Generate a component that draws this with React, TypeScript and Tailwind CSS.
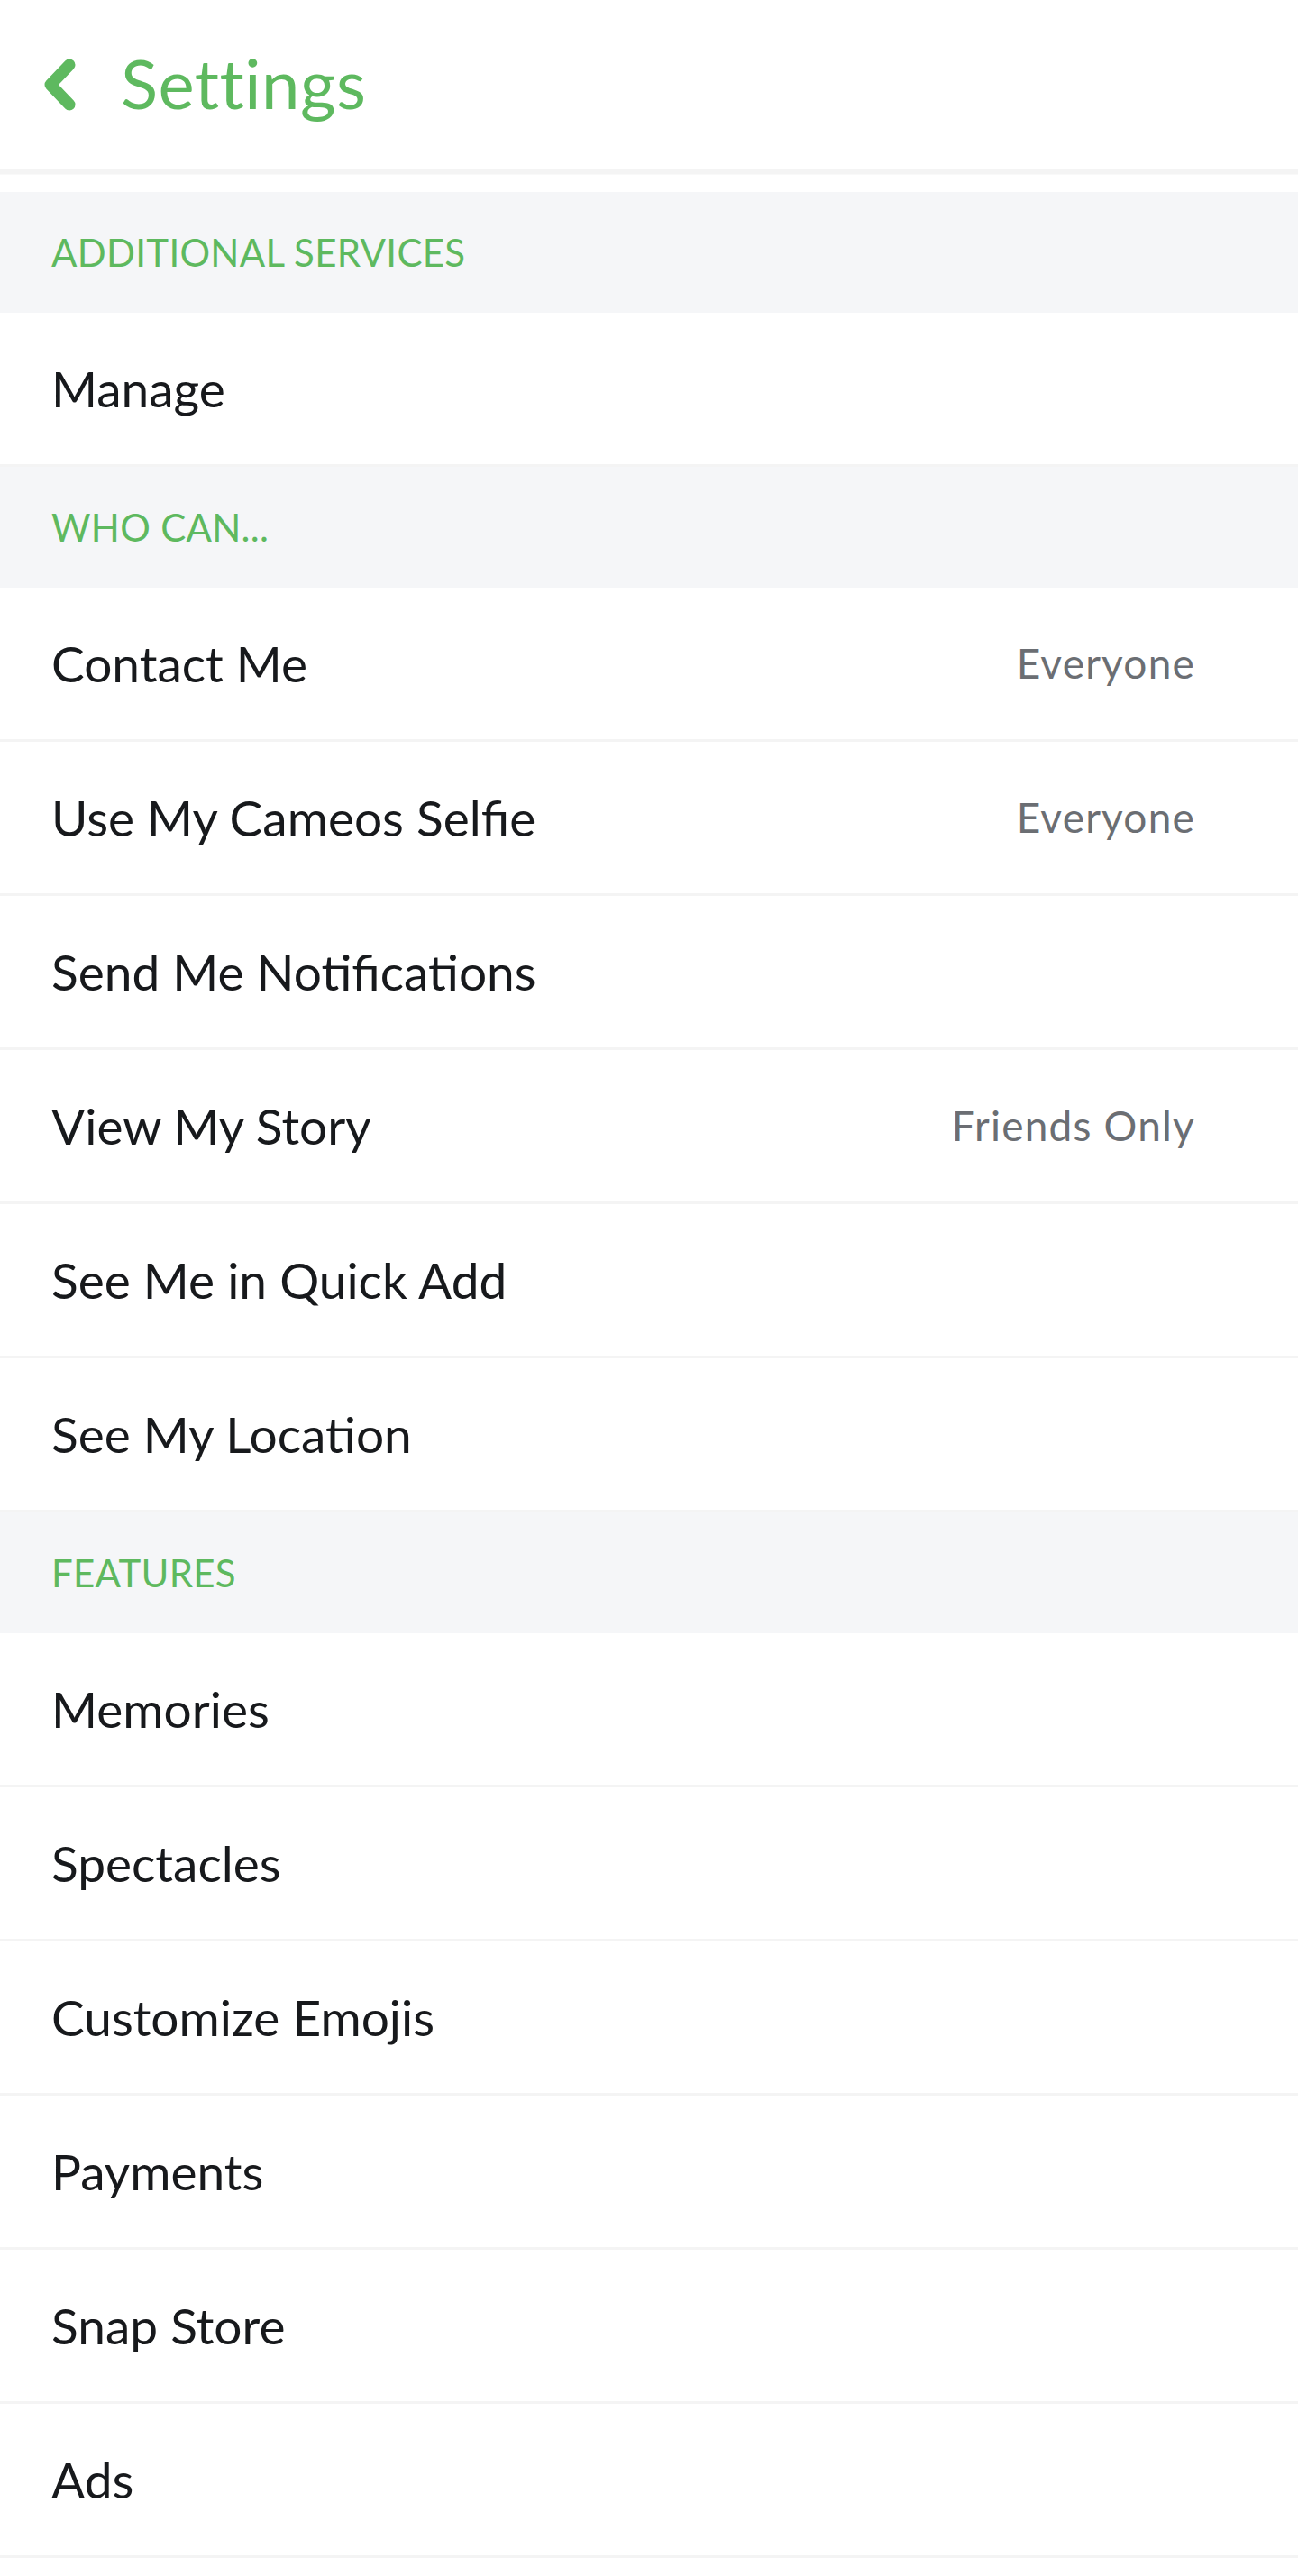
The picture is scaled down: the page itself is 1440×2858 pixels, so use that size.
import React from 'react';

type Row = { label: string; value?: string };
type Section = { title: string; rows: Row[] };

const sections: Section[] = [
  { title: 'Additional Services', rows: [{ label: 'Manage' }] },
  {
    title: 'Who Can...',
    rows: [
      { label: 'Contact Me', value: 'Everyone' },
      { label: 'Use My Cameos Selfie', value: 'Everyone' },
      { label: 'Send Me Notifications' },
      { label: 'View My Story', value: 'Friends Only' },
      { label: 'See Me in Quick Add' },
      { label: 'See My Location' },
    ],
  },
  {
    title: 'Features',
    rows: [
      { label: 'Memories' },
      { label: 'Spectacles' },
      { label: 'Customize Emojis' },
      { label: 'Payments' },
      { label: 'Snap Store' },
      { label: 'Ads' },
    ],
  },
];

function BackChevron() {
  return (
    <svg width="35" height="58" viewBox="0 0 35 58" fill="none" aria-hidden="true">
      <path
        d="M28 7 L7 29 L28 51"
        stroke="#5eb95f"
        strokeWidth="13"
        strokeLinecap="round"
        strokeLinejoin="round"
      />
    </svg>
  );
}

function SectionHeader({ title }: { title: string }) {
  return (
    <div className="flex h-[134px] items-center bg-[#f5f6f8] pl-[57px]">
      <span className="text-[42px] leading-none tracking-[0.3px] uppercase text-[#5eb95f]">{title}</span>
    </div>
  );
}

function SettingsRow({ label, value }: Row) {
  return (
    <div className="flex h-[171px] items-center justify-between border-b-[3px] border-[#f4f4f4] bg-white pl-[57px] pr-[114px]">
      <span className="text-[55px] leading-none text-[#17191c]">{label}</span>
      {value && <span className="text-[46px] leading-none tracking-[1.2px] text-[#6b6e73]">{value}</span>}
    </div>
  );
}

export default function App() {
  return (
    <div
      className="min-h-[2858px] w-full bg-white"
      style={{ fontFamily: 'Lato, "Open Sans", "Noto Sans", sans-serif' }}
    >
      <header className="flex h-[188px] items-center gap-[50px] pl-[49px]">
        <BackChevron />
        <h1 className="pb-[4px] text-[76px] leading-none tracking-[0.5px] font-normal text-[#5eb95f]">Settings</h1>
      </header>
      <div className="h-[5px] bg-[#f4f4f4]" />
      <div className="h-[1px] bg-[#f9f9f9]" />
      <div className="h-[19px] bg-white" />

      {sections.map((section) => (
        <div key={section.title}>
          <SectionHeader title={section.title} />
          {section.rows.map((row) => (
            <SettingsRow key={row.label} label={row.label} value={row.value} />
          ))}
        </div>
      ))}
    </div>
  );
}
